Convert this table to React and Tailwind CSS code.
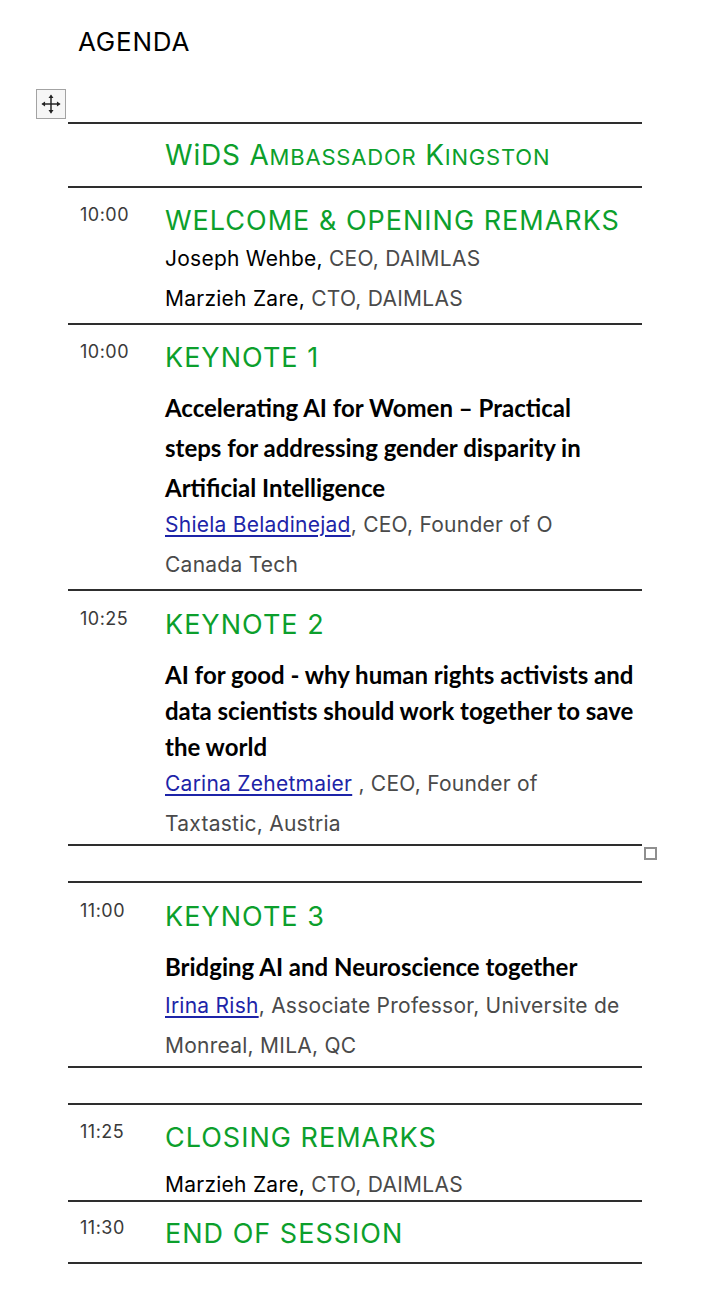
import React from "react";

const G = "text-[#0c9f2c]";

function Time({ children }) {
  return (
    <div className="w-[97px] shrink-0 pl-3 text-[18px] leading-6 tracking-[0.5px] text-[#3a3a3a]">
      {children}
    </div>
  );
}

function Title({ children }) {
  return (
    <div className={`text-[27px] leading-9 tracking-[1px] whitespace-nowrap ${G}`}>{children}</div>
  );
}

function Link({ children }) {
  return (
    <span className="text-[#1d24a8] underline decoration-[#1d24a8] underline-offset-[3px] decoration-[1.5px]">
      {children}
    </span>
  );
}

function MoveIcon() {
  return (
    <svg width="22" height="22" viewBox="0 0 24 24">
      <line x1="3" y1="12" x2="21" y2="12" stroke="#222" strokeWidth="1.6" />
      <line x1="12" y1="3" x2="12" y2="21" stroke="#222" strokeWidth="1.6" />
      <polygon points="12,1.5 9.3,5.5 14.7,5.5" fill="#222" />
      <polygon points="12,22.5 9.3,18.5 14.7,18.5" fill="#222" />
      <polygon points="1.5,12 5.5,9.3 5.5,14.7" fill="#222" />
      <polygon points="22.5,12 18.5,9.3 18.5,14.7" fill="#222" />
    </svg>
  );
}

export default function App() {
  const row = "flex border-t-2 border-[#2e2e2e]";
  const name = "text-[21px] tracking-[0.25px] whitespace-nowrap text-[#4a4a4a]";
  const bold = "font-['Lato',sans-serif] font-bold text-[24px] text-black whitespace-nowrap";
  return (
    <div className="w-[720px] min-h-[1296px] bg-white font-['Inter',sans-serif]">
      <div className="pl-[78px] pt-[27px] text-[26px] leading-[30px] tracking-[0.8px] text-black">AGENDA</div>

      <div className="relative ml-[68px] mt-[65px] w-[574px] border-b-2 border-[#2e2e2e]">
        <div className="absolute left-[-32px] top-[-33px] flex h-[30px] w-[30px] items-center justify-center border border-[#a3a3a3] bg-[#f6f6f6]">
          <MoveIcon />
        </div>

        {/* WiDS heading */}
        <div className={`${row} pt-[13px] pb-[13px]`}>
          <div className="w-[97px] shrink-0" />
          <div className={`h-9 text-[28px] leading-9 tracking-[0.8px] whitespace-nowrap ${G}`}>
            W<span>i</span>DS A<span className="text-[22px] leading-none">MBASSADOR</span> K
            <span className="text-[22px] leading-none">INGSTON</span>
          </div>
        </div>

        {/* Welcome */}
        <div className={`${row} pt-[15px] pb-[4px]`}>
          <Time>10:00</Time>
          <div className="flex-1">
            <Title>WELCOME &amp; OPENING REMARKS</Title>
            <div className={`${name} leading-10`}>
              <span className="text-black">Joseph Wehbe,</span> CEO, DAIMLAS
            </div>
            <div className={`${name} leading-10`}>
              <span className="text-black">Marzieh Zare,</span> CTO, DAIMLAS
            </div>
          </div>
        </div>

        {/* Keynote 1 */}
        <div className={`${row} pt-[15px] pb-[4px]`}>
          <Time>10:00</Time>
          <div className="flex-1">
            <Title>KEYNOTE 1</Title>
            <div className={`${bold} mt-3 leading-10`}>
              <div>Accelerating AI for Women – Practical</div>
              <div>steps for addressing gender disparity in</div>
              <div>Artificial Intelligence</div>
            </div>
            <div className={`${name} mt-[-3px] leading-10`}>
              <div>
                <Link>Shiela Beladinejad</Link>, CEO, Founder of O
              </div>
              <div>Canada Tech</div>
            </div>
          </div>
        </div>

        {/* Keynote 2 */}
        <div className={`${row} pt-[16px]`}>
          <Time>10:25</Time>
          <div className="flex-1">
            <Title>KEYNOTE 2</Title>
            <div className={`${bold} mt-[14px] leading-9`}>
              <div>AI for good - why human rights activists and</div>
              <div>data scientists should work together to save</div>
              <div>the world</div>
            </div>
            <div className={`${name} mt-[-1px] leading-10`}>
              <div>
                <Link>Carina Zehetmaier</Link> , CEO, Founder of
              </div>
              <div>Taxtastic, Austria</div>
            </div>
          </div>
        </div>

        {/* empty row with handle */}
        <div className={`${row} relative h-[37px]`}>
          <div className="absolute left-[576px] top-[1px] h-[13px] w-[13px] border-2 border-[#8f8f8f] bg-white" />
        </div>

        {/* Keynote 3 */}
        <div className={`${row} pt-[16px]`}>
          <Time>11:00</Time>
          <div className="flex-1">
            <Title>KEYNOTE 3</Title>
            <div className={`${bold} mt-[13px] leading-[38px]`}>Bridging AI and Neuroscience together</div>
            <div className={`${name} leading-10`}>
              <div>
                <Link>Irina Rish</Link>, Associate Professor, Universite de
              </div>
              <div>Monreal, MILA, QC</div>
            </div>
          </div>
        </div>

        <div className={`${row} h-[37px]`} />

        {/* Closing */}
        <div className={`${row} pt-[15px]`}>
          <Time>11:25</Time>
          <div className="flex-1">
            <Title>CLOSING REMARKS</Title>
            <div className={`${name} mt-[14px] leading-[30px]`}>
              <span className="text-black">Marzieh Zare,</span> CTO, DAIMLAS
            </div>
          </div>
        </div>

        {/* End */}
        <div className={`${row} pt-[14px] pb-[10px]`}>
          <Time>11:30</Time>
          <div className="flex-1">
            <Title>END OF SESSION</Title>
          </div>
        </div>
      </div>
    </div>
  );
}
